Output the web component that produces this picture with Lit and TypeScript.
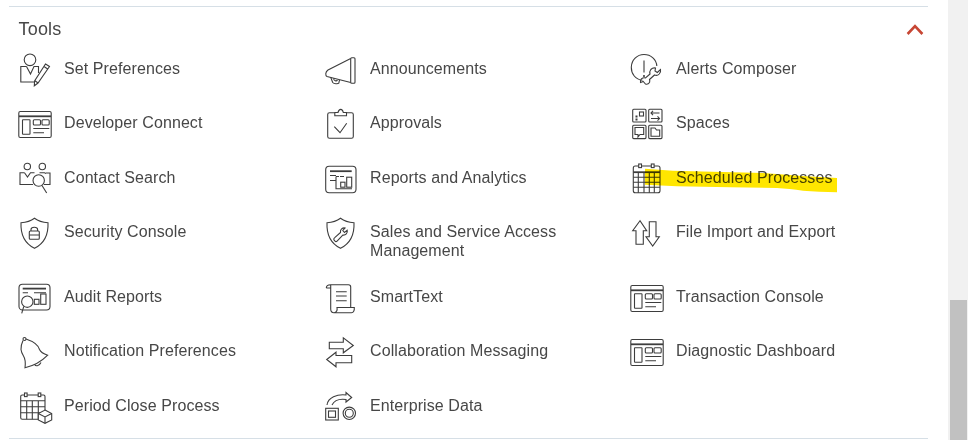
import { LitElement, html, css, svg } from "lit";
import { customElement } from "lit/decorators.js";

const win = svg`<rect x="0.8" y="6.5" width="32.4" height="26" rx="1.5"/><path class="b" d="M1 11.3H33"/><rect x="4.5" y="14.7" width="7.5" height="14.6" rx=".5"/><rect x="15.3" y="14.7" width="7.2" height="5.3" rx="1"/><rect x="24" y="14.7" width="7.2" height="5.3" rx="1"/><path d="M15.3 23.5H31.3M15.3 27.7H26"/>`;

const shield = svg`<path d="M16.5 4.3C13 7 8 8.5 3 8.7 2.5 20 6 29 16.5 34.3 27 29 30.5 20 30 8.7 25 8.5 20 7 16.5 4.3Z"/>`;

const icons: Record<string, unknown> = {
  pref: svg`<circle cx="12" cy="8.8" r="5.8"/><path d="M8.5 15.5H2.8V31H17M8.5 15.5L12.5 23 16 15.5H20.5V22"/><path d="M27.5 13L31.5 15.5 20 32 16.3 34.8 16.6 30ZM26 15.5L30 18.2M17 29.8L20 32"/>`,
  dev: win,
  contact: svg`<circle cx="9.3" cy="6.5" r="3.2"/><circle cx="24.3" cy="6.5" r="3.2"/><path d="M6.5 12.8H2V24.5H15M6.5 12.8L9.5 17 12.5 12.8H16.5M21.5 12.8H26.5L28 13.5M28 13H32V24.5H26"/><circle cx="20.7" cy="20.5" r="5.7"/><path d="M24 25.5L28.7 33"/>`,
  security: svg`${shield}<rect x="11.3" y="17" width="10" height="8.3" rx="1"/><path d="M13 17V15.5C13 12.5 19.6 12.5 19.6 15.5V17M11.5 21H21"/>`,
  audit: svg`<rect x="1" y="5.3" width="31" height="25.7" rx="3.5"/><path class="b" d="M4.7 9.6H28"/><path d="M4.7 13.8H10M16 13.8H28"/><circle cx="9.3" cy="22.7" r="5.7" fill="#fff"/><path d="M5.8 27.3L3.7 34.3"/><rect x="16.3" y="20.3" width="4.7" height="5"/><rect x="22.7" y="15" width="5.3" height="10.3"/>`,
  bell: svg`<circle cx="6.5" cy="6" r="1.5"/><path d="M8 6C14 8 20 11 21.5 16.5 23 20 26 21 29.7 22.2 24 28 15 33 7 34.8 7.5 30 8 27 5.5 23 3 19 1.5 15 5 7.5"/><path d="M16.5 31.2C17.5 33.5 21 33.5 23 29.5"/>`,
  period: svg`<rect x="2.7" y="7" width="24.3" height="24.3" rx="1.5"/><rect class="w" x="6.5" y="5" width="2.6" height="3.6"/><rect class="w" x="20.2" y="5" width="2.6" height="3.6"/><path d="M2.7 12.7H27M2.7 18.7H27M2.7 24.7H27M8.7 12.7V31.3M14.3 12.7V31.3M20.3 12.7V31.3"/><path class="w" d="M27 22L33.7 25.5V32L27 35.3 20.3 32V25.5Z"/><path d="M20.3 25.5L27 29 33.7 25.5M27 29V35.3"/>`,
  announce: svg`<path d="M26.7 7.5L4 19C1.2 21 1.2 24.5 3 25.5L26.7 31.5"/><rect x="26.7" y="6.8" width="4.3" height="25.4" rx="1"/><path d="M6.7 26.2L8.7 31.5C10 33 14 33 14.8 32.2L15.5 29M9.5 27.5C10 30 12.5 30.5 13.5 29.2"/>`,
  approve: svg`<path d="M10.8 7.7H5.5C4.5 7.7 3.7 8.5 3.7 9.5V31.5C3.7 32.5 4.5 33.3 5.5 33.3H27.5C28.5 33.3 29.3 32.5 29.3 31.5V9.5C29.3 8.5 28.5 7.7 27.5 7.7H22.5"/><path d="M10.8 10.8V7.5H14C15 3.3 18.5 3.3 19.3 7.5H22.5V10.8Z"/><path d="M10.3 21.7L16 27.7 22.7 18.3"/>`,
  reports: svg`<rect x="1.7" y="6.2" width="30.3" height="26.6" rx="3.5"/><path class="b" d="M6 11.2H27.7"/><path d="M6 15.5H12M6 20.5H12M12 16.5V28.8H28M12 16.5H15M20 16.5H16"/><rect x="16.7" y="22.2" width="4.3" height="5"/><rect x="22.7" y="17.2" width="5" height="10"/>`,
  wrenchshield: svg`${shield}<path d="M11 27.2C9 25.5 9.8 24.3 11 23.3L16.5 18.5C16 15.5 18.5 13.5 21 14L18.8 16.5 20.5 18.5 23.2 16.2C24 19 21.5 21.5 18.8 21L13.3 26.8C12.5 27.7 11.7 27.8 11 27.2Z"/>`,
  smart: svg`<path d="M2.3 9C2.3 6.5 4 5.7 6.5 5.7H24.5C25.7 5.7 26.7 6.7 26.7 8V28.5M6.7 6V30C6.7 32 8 33.7 10 33.7H27.5C29.5 33.7 30.5 31.5 30.3 28.5H13C13.5 31 12.7 33.7 10 33.7M2.3 9H6.7"/><path d="M12 12.7H22.7M12 17H22.7M12 21.7H22.7"/>`,
  collab: svg`<path d="M5.3 9.2H19.3V4.8L29.3 12.5 19.3 19.8V15.8H5.3Z"/><path d="M27.7 22.5H12V19.2L2.7 26.5 12 33.8V29.8H27.7Z"/>`,
  enterprise: svg`<rect x="1.7" y="20.3" width="12.6" height="11.7"/><rect x="4.5" y="23" width="7" height="6.3"/><circle cx="25.3" cy="25.3" r="6.2"/><circle cx="25.3" cy="25.3" r="4"/><path d="M3 17C4 9.5 13 6 22 7V4.5L27.7 9.5 22 14V11.5C15 10.5 10 13 8 17"/>`,
  alerts: svg`<path d="M12.5 29.3C5.5 28.5 1.2 23 1.3 16.2 1.5 9 7 3.5 14 3.5 21 3.5 26.5 8.5 26.8 15M14 9.5V21.5"/><circle cx="14" cy="25" r=".5"/><path d="M13.3 30.5L15.5 33C17 33.5 18.5 33 19.5 31.5 20 30 20 29.5 19.5 28.5L24.5 24C26.5 24.8 28 24.3 29.2 23 30.5 21.5 31 20.3 30.5 18.5L27.3 21.5 25 20 25.5 17C23.5 16.5 22 17.3 20.8 18.5 19.7 20 19.5 21.5 20 23L15.5 27C14 26.5 12.5 27 11.3 28 10.5 29 10.2 29.5 10.5 31.5L13.3 30.5Z"/>`,
  spaces: svg`<rect x="2.7" y="4.3" width="13.3" height="12.7" rx="1"/><rect x="18.7" y="4.3" width="13.3" height="12.7" rx="1"/><rect x="2.7" y="20.3" width="13.3" height="13.3" rx="1"/><rect x="18.7" y="20.3" width="13.3" height="13.3" rx="1"/><path class="b" d="M5.5 11.5H7.5M5.5 14.5H7.5"/><rect x="9.5" y="7" width="4" height="4"/><path d="M21 8H29.5M23 5.8L21 8 23 10.2M21 13.5H29.5M27.5 11.3L29.5 13.5 27.5 15.7"/><path d="M5 22.5H13.7V29.5H10L8 32V29.5H5Z"/><path d="M21 23H25L26.5 25H29.7V31.3H21Z"/>`,
  sched: svg`<rect x="3.3" y="6" width="26.7" height="26.8" rx="2"/><rect class="w" x="8.7" y="4" width="2.8" height="3.6"/><rect class="w" x="21.3" y="4" width="2.8" height="3.6"/><path class="b" d="M3.3 12.2H30"/><path d="M3.3 17.2H30M3.3 22.2H30M3.3 27.2H30M8.3 12.2V32.8M14 12.2V32.8M19.3 12.2V32.8M24.3 12.2V32.8"/>`,
  file: svg`<path d="M10 6.7L2.7 16.7H6V30.3H13.3V16.7H16.7Z"/><path d="M19.3 7.7H26V22.7H29.3L22.7 32 16 22.7H19.3Z"/>`,
  tx: win,
  diag: win,
};

const rows: { label: string; icon: string }[] = [
  { label: "Set Preferences", icon: "pref" },
  { label: "Announcements", icon: "announce" },
  { label: "Alerts Composer", icon: "alerts" },
  { label: "Developer Connect", icon: "dev" },
  { label: "Approvals", icon: "approve" },
  { label: "Spaces", icon: "spaces" },
  { label: "Contact Search", icon: "contact" },
  { label: "Reports and Analytics", icon: "reports" },
  { label: "Scheduled Processes", icon: "sched" },
  { label: "Security Console", icon: "security" },
  { label: "Sales and Service Access Management", icon: "wrenchshield" },
  { label: "File Import and Export", icon: "file" },
  { label: "Audit Reports", icon: "audit" },
  { label: "SmartText", icon: "smart" },
  { label: "Transaction Console", icon: "tx" },
  { label: "Notification Preferences", icon: "bell" },
  { label: "Collaboration Messaging", icon: "collab" },
  { label: "Diagnostic Dashboard", icon: "diag" },
  { label: "Period Close Process", icon: "period" },
  { label: "Enterprise Data", icon: "enterprise" },
];

@customElement("app-root")
export class AppRoot extends LitElement {
  static styles = css`
    :host {
      display: flex;
      position: relative;
      width: 968px;
      height: 440px;
      overflow: hidden;
      background: #fff;
      font-family: "Liberation Sans", Arial, sans-serif;
      color: #474747;
    }
    .main {
      width: 919px;
      margin: 6px 20px 0 9px;
      height: 433px;
      box-sizing: border-box;
      border-top: 1px solid #d6dfe6;
      border-bottom: 1px solid #d6dfe6;
      display: flex;
      flex-direction: column;
    }
    .head {
      height: 43.8px;
      box-sizing: border-box;
      padding: 12px 4px 0 9.5px;
      display: flex;
      justify-content: space-between;
      align-items: flex-start;
    }
    .title {
      font-size: 18px;
      line-height: 21px;
      letter-spacing: 0.2px;
    }
    .chev {
      width: 18px;
      height: 12px;
      margin-top: 5px;
      fill: none;
      stroke: #c74634;
      stroke-width: 2.6;
    }
    .grid {
      display: grid;
      grid-template-columns: repeat(3, 306px);
      row-gap: 19px;
      padding-left: 9px;
    }
    .item {
      display: flex;
      min-height: 35.4px;
      box-sizing: border-box;
      align-items: flex-start;
    }
    .ic {
      flex: none;
      width: 36px;
      height: 36px;
      margin: 0 10px -2px 0;
      fill: none;
      stroke: #3d3d3d;
      stroke-width: 1.1;
      overflow: visible;
    }
    .ic .b {
      stroke-width: 1.8;
    }
    .ic .w {
      fill: #fff;
    }
    .label {
      padding-top: 8px;
      font-size: 16px;
      line-height: 19px;
      letter-spacing: 0.09px;
      width: 240px;
    }
    .track {
      position: absolute;
      top: 0;
      right: 0;
      bottom: 0;
      width: 20px;
      background: #f1f1f1;
    }
    .thumb {
      position: absolute;
      top: 300px;
      bottom: 0;
      left: 2px;
      width: 17px;
      background: #c1c1c1;
    }
    .mark {
      position: absolute;
      left: 0;
      top: 0;
      width: 968px;
      height: 440px;
      mix-blend-mode: multiply;
      pointer-events: none;
    }
    .mark path {
      fill: #ffe600;
    }
  `;

  render() {
    return html`
      <div class="main">
        <div class="head">
          <span class="title">Tools</span>
          <svg class="chev" viewBox="0 0 18 12"><path d="M1.6 10L9 2.2 16.4 10" /></svg>
        </div>
        <div class="grid">
          ${rows.map(
            (r) => html`<div class="item">
              <svg class="ic" viewBox="0 0 36 36">${icons[r.icon]}</svg>
              <span class="label">${r.label}</span>
            </div>`
          )}
        </div>
      </div>
      <div class="track"><div class="thumb"></div></div>
      <svg class="mark" viewBox="0 0 968 440">
        <path d="M645 168.7L673 170.7 763 173C790 175 815 177 837 178V192.3C825 192 813 191.5 803 190.7 794 189.5 785 188.5 777 188L730 187.3 677 186.3 645 184.7Z" />
      </svg>
    `;
  }
}
